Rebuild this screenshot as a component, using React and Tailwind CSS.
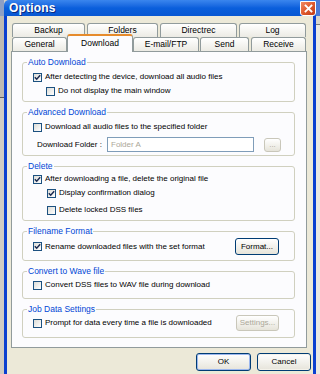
import React from 'react';

const Check = ({ checked }) => (
  <div className="w-[9px] h-[9px] shrink-0 border border-[#1c5180] bg-gradient-to-br from-[#dcdcd7] to-white flex items-center justify-center">
    {checked && (
      <svg width="7" height="7" viewBox="0 0 7 7">
        <path d="M0.8 3.2 L2.7 5.2 L6.2 1.2" fill="none" stroke="#1b2b52" strokeWidth="1.5" />
      </svg>
    )}
  </div>
);

const Row = ({ checked, label, className = '' }) => (
  <div className={`flex items-center gap-[3px] ${className}`}>
    <Check checked={checked} />
    <span className="whitespace-nowrap">{label}</span>
  </div>
);

const Group = ({ title, className = '', children }) => (
  <fieldset className={`border border-[#d0d0bf] rounded-[3px] pl-[10px] pr-[13px] ${className}`}>
    <legend className="-ml-[6px] px-[1px] text-[#0046d5] text-[8.5px] leading-[10px]">{title}</legend>
    {children}
  </fieldset>
);

const XpButton = ({ children, disabled, className = '' }) => (
  <div
    className={`flex items-center justify-center rounded-[3px] border bg-gradient-to-b from-white to-[#e6e4da] ${
      disabled ? 'border-[#c9c7ba] text-[#aca899]' : 'border-[#003c74] text-black'
    } ${className}`}
  >
    {children}
  </div>
);

const Tab = ({ label, className = '' }) => (
  <div className={`h-[14px] border border-b-0 border-[#919b9c] rounded-t-[3px] bg-gradient-to-b from-white to-[#ecebe4] flex items-center justify-center ${className}`}>
    {label}
  </div>
);

const App = () => {
  return (
    <div
      className="w-[320px] h-[374px] overflow-hidden flex bg-[#d4d0c8] text-[8px] text-black"
      style={{ fontFamily: '"Liberation Sans", Arial, sans-serif' }}
    >
      {/* window behind, left */}
      <div className="w-[4px] flex flex-col bg-[#bdbab2]">
        <div className="h-[16px] bg-[#8d9fc4]" />
        <div className="h-[81px]" />
        <div className="h-[1px] bg-[#5a5a5a]" />
        <div className="flex-1 bg-[#cfccc4]" />
      </div>

      {/* dialog */}
      <div className="w-[312px] flex flex-col">
        {/* Title bar */}
        <div className="h-[16px] flex items-center justify-between rounded-tl-[5px] bg-gradient-to-b from-[#3a86ee] via-[#0a5fdc] to-[#0857d2] pl-[5px]">
          <span className="text-white font-bold text-[12px] leading-none tracking-[0.2px] [text-shadow:1px_1px_0_#0a2a80]">Options</span>
          <div className="w-[16px] h-[15px] rounded-b-[3px] border border-white bg-gradient-to-br from-[#f08a62] via-[#e05a2e] to-[#c03b14] flex items-center justify-center">
            <svg width="9" height="9" viewBox="0 0 9 9">
              <path d="M1.5 1.5 L7.5 7.5 M7.5 1.5 L1.5 7.5" stroke="white" strokeWidth="1.8" strokeLinecap="square" />
            </svg>
          </div>
        </div>

        {/* Body */}
        <div className="flex-1 flex flex-col bg-[#ece9d8] border-l-[3px] border-r-[3px] border-[#0a3fd0] pt-[7px]">
          {/* Tabs row 1 */}
          <div className="flex pl-[5px] text-[8.5px]">
            <Tab label="Backup" className="w-[73px]" />
            <Tab label="Folders" className="w-[71px] ml-[2px]" />
            <Tab label="Directrec" className="w-[77px] ml-[2px]" />
            <Tab label="Log" className="w-[67px] ml-[2px]" />
          </div>
          {/* Tabs row 2 */}
          <div className="flex items-end h-[14px] pl-[5px] text-[8.5px]">
            <Tab label="General" className="w-[55px]" />
            <div className="relative z-10 w-[66px] h-[18px] -mb-[1px] border border-b-0 border-[#919b9c] border-t-[2px] border-t-[#e68b2c] rounded-t-[3px] bg-[#fcfcfe] flex items-center justify-center pb-[1px]">
              Download
            </div>
            <Tab label="E-mail/FTP" className="w-[66px]" />
            <Tab label="Send" className="w-[49px] ml-[1px]" />
            <Tab label="Receive" className="w-[55px] ml-[2px]" />
          </div>

          {/* Pane */}
          <div className="ml-[4px] mr-[6px] h-[297px] border border-[#919b9c] bg-[#fcfcfe] pl-[10px] pr-[11px] pt-[5px] flex flex-col gap-[5px]">
            <Group title="Auto Download" className="h-[45px]">
              <div className="pt-[3px]">
                <Row checked label="After detecting the device, download all audio files" className="h-[14px]" />
                <Row label="Do not display the main window" className="h-[14px] ml-[13px]" />
              </div>
            </Group>

            <Group title="Advanced Download" className="h-[49px]">
              <div className="pt-[3px]">
                <Row label="Download all audio files to the specified folder" className="h-[14px]" />
                <div className="mt-[3px] h-[15px] flex items-center">
                  <span className="ml-[4px] w-[70px] whitespace-nowrap">Download Folder :</span>
                  <div className="w-[147px] h-[15px] border border-[#7f9db9] bg-white flex items-center pl-[3px] text-[#aca899]">
                    Folder A
                  </div>
                  <XpButton disabled className="ml-[10px] w-[17px] h-[14px] leading-none">...</XpButton>
                </div>
              </div>
            </Group>

            <Group title="Delete" className="h-[60px]">
              <div className="pt-[1px]">
                <Row checked label="After downloading a file, delete the original file" className="h-[14px]" />
                <Row checked label="Display confirmation dialog" className="h-[14px] ml-[14px]" />
                <Row label="Delete locked DSS files" className="h-[14px] ml-[14px] mt-[3px]" />
              </div>
            </Group>

            <Group title="Filename Format" className="h-[35px]">
              <div className="pt-[2px] flex items-center justify-between">
                <Row checked label="Rename downloaded files with the set format" className="h-[17px]" />
                <XpButton className="w-[44px] h-[17px] mr-[2px]">Format...</XpButton>
              </div>
            </Group>

            <Group title="Convert to Wave file" className="h-[33px]">
              <div className="pt-[2px]">
                <Row label="Convert DSS files to WAV file during download" className="h-[14px]" />
              </div>
            </Group>

            <Group title="Job Data Settings" className="h-[34px]">
              <div className="pt-[1px] flex items-center justify-between">
                <Row label="Prompt for data every time a file is downloaded" className="h-[16px]" />
                <XpButton disabled className="w-[43px] h-[16px] mr-[2px]">Settings...</XpButton>
              </div>
            </Group>
          </div>

          {/* Bottom buttons */}
          <div className="flex justify-end gap-[6px] mt-[5px] mr-[2px]">
            <XpButton className="w-[55px] h-[18px] shadow-[inset_0_0_0_1px_#9cb7ee]">OK</XpButton>
            <XpButton className="w-[54px] h-[18px] shadow-[inset_0_0_0_1px_#f4f2ea]">Cancel</XpButton>
          </div>
        </div>
      </div>

      {/* window behind, right */}
      <div className="flex-1 flex flex-col bg-[#e9e8e3]">
        <div className="h-[16px] bg-[#4d7ad6]" />
        <div className="h-[8px] bg-[#d9d6cc]" />
        <div className="h-[1px] bg-[#7a7a7a]" />
        <div className="flex-1" />
      </div>
    </div>
  );
};

export default App;
